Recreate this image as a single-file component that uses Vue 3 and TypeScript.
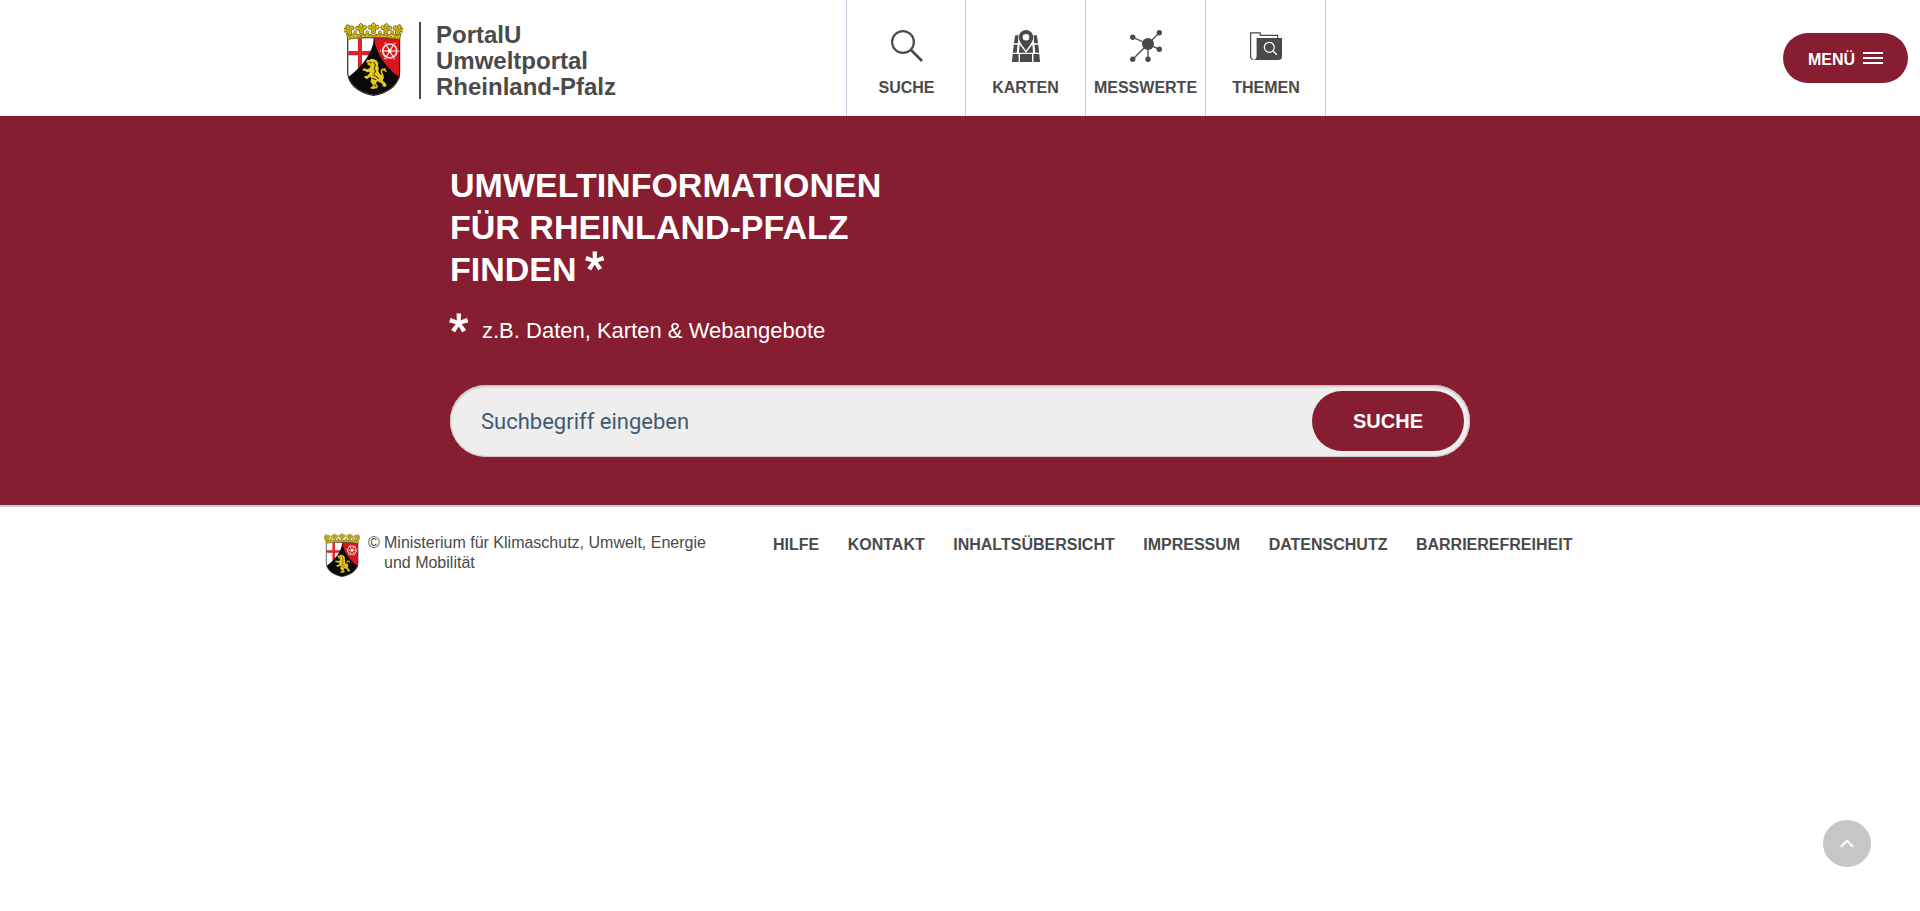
<script setup lang="ts">
import { ref, defineComponent, h } from 'vue'

interface NavItem {
  label: string
  icon: 'search' | 'map' | 'network' | 'folder'
}

const navItems: NavItem[] = [
  { label: 'SUCHE', icon: 'search' },
  { label: 'KARTEN', icon: 'map' },
  { label: 'MESSWERTE', icon: 'network' },
  { label: 'THEMEN', icon: 'folder' },
]

const footerLinks: string[] = [
  'HILFE',
  'KONTAKT',
  'INHALTSÜBERSICHT',
  'IMPRESSUM',
  'DATENSCHUTZ',
  'BARRIEREFREIHEIT',
]

const query = ref('')

const spokes = [0, 60, 120]
const leaves = [
  { x: 58, y: 62, r: -18 },
  { x: 94, y: 59, r: -6 },
  { x: 130, y: 57, r: 0 },
  { x: 167, y: 59, r: 6 },
  { x: 202, y: 62, r: 18 },
]

// Coat of arms, used in the header and in the footer
const CoatOfArms = defineComponent({
  setup() {
    const shield = 'M54 82H207V186C207 218 180 246 130.500 255C81 246 54 218 54 186Z'
    return () =>
      h('svg', { viewBox: '43 35 174 222', preserveAspectRatio: 'none', 'aria-hidden': 'true' }, [
        h('path', { d: shield, fill: '#fff' }),
        h('path', { d: 'M130 82H207V205H130Z', fill: '#d8161d' }),
        h('path', { d: 'M84 84H96V122H126V135H96V184H84V135H56V122H84Z', fill: '#e0202a' }),
        h('path', {
          d: 'M132 84C127 130 96 170 56 200C66 230 96 248 130.500 254C166 248 196 230 205 200C165 170 137 130 132 84Z',
          fill: '#0c0a08',
        }),
        h('path', { d: shield, fill: 'none', stroke: '#2c2928', 'stroke-width': 3.5 }),
        h('g', { stroke: '#f6dede', fill: 'none' }, [
          h('circle', { cx: 178, cy: 122, r: 21, 'stroke-width': 5 }),
          h('circle', { cx: 178, cy: 122, r: 27, 'stroke-width': 3, 'stroke-dasharray': '6 22.270', 'stroke-dashoffset': 3 }),
          ...spokes.map((a) =>
            h('path', { d: 'M158 122H198', 'stroke-width': 4, transform: `rotate(${a} 178 122)` }),
          ),
        ]),
        h('circle', { cx: 178, cy: 122, r: 5, fill: '#fff' }),
        h('path', {
          d: 'M108 154L112 148L118 149L123 145L132 147L140 151L144 158L143 166L146 173L144 182L148 190L155 195L159 202L157 211L163 216L169 224L165 230L157 228L156 221L149 216L141 213L137 219L143 227L141 234L127 236L119 233L128 228L127 221L121 214L124 204L120 199L112 206L104 203L103 197L111 197L117 190L119 184L110 186L105 181L99 182L98 176L106 174L111 177L119 174L121 166L112 163L113 159Z',
          fill: '#e6cb1c',
        }),
        h('path', {
          d: 'M151 207C163 206 158 196 155 190C150 181 155 175 162 178L168 184M154 180L166 175',
          fill: 'none',
          stroke: '#e6cb1c',
          'stroke-width': 4.5,
        }),
        h('path', {
          d: 'M130 155L136 164L132 174L136 183L131 190M128 193L138 198L146 206M116 155L124 158M126 204L138 208M132 222L138 229',
          fill: 'none',
          stroke: '#3c330a',
          'stroke-width': 3,
        }),
        h('path', {
          d: 'M50 68L60 76L76 70L92 75L112 70L130 75L148 70L168 75L184 70L200 76L211 68L207 87C160 79 101 79 54 87Z',
          fill: '#dcc21c',
          stroke: '#67580f',
          'stroke-width': 2.5,
        }),
        h('path', { d: 'M58 82C105 74 156 74 203 82', fill: 'none', stroke: '#8b761a', 'stroke-width': 3, 'stroke-dasharray': '6 5' }),
        ...leaves.map((l) =>
          h('g', { transform: `translate(${l.x} ${l.y}) rotate(${l.r})` }, [
            h('path', {
              d: 'M0 -20L6 -15L5 -9L12 -13L17 -7L13 0L6 -1L5 12H-5L-6 -1L-13 0L-17 -7L-12 -13L-5 -9L-6 -15Z',
              fill: '#dfc51c',
              stroke: '#6b5c10',
              'stroke-width': 2.5,
            }),
            h('path', { d: 'M-9 -5H9M0 -12V8', stroke: '#94801a', 'stroke-width': 2 }),
          ]),
        ),
        ...[76, 112, 149, 185].map((x) =>
          h('circle', { cx: x, cy: 66, r: 4.5, fill: '#e4cc2c', stroke: '#6b5c10', 'stroke-width': 2 }),
        ),
      ])
  },
})
</script>

<template>
  <div class="page">
    <header class="header">
      <a class="brand">
        <CoatOfArms class="crest" />
        <span class="brand-name">PortalU<br />Umweltportal<br />Rheinland-Pfalz</span>
      </a>
      <nav class="nav">
        <a v-for="item in navItems" :key="item.label" class="nav-item" :class="item.icon">
          <svg v-if="item.icon === 'search'" class="nav-icon" viewBox="0 0 32 32">
            <circle cx="12" cy="12" r="10.900" fill="none" stroke="currentColor" stroke-width="2.2" />
            <path d="M19.800 19.800L31 31" stroke="currentColor" stroke-width="2.700" />
          </svg>
          <svg v-else-if="item.icon === 'map'" class="nav-icon" viewBox="0 0 32 32">
            <path d="M5.200 5.300H9L7.700 13.200H3.900ZM3.700 14.800H7.500L6.800 22.700H2.900ZM2.700 24.100H8.600V32H2ZM23 5.300H26.800L28.100 13.200H24.300ZM24.500 14.800H28.300L29.100 22.700H25.200ZM23.400 24.100H29.300L30 32H23.400ZM10 24.100H22V32H10ZM9.600 14.800L10.800 16L16 22.700H9ZM22.400 14.800L21.200 16L16 22.700H23Z" fill="currentColor" />
            <path d="M16 0A7.200 7.200 0 0 1 23.200 7.200C23.200 12 18.500 16.500 16 20.700C13.500 16.500 8.800 12 8.800 7.200A7.200 7.200 0 0 1 16 0Z" fill="currentColor" stroke="#fff" stroke-width="1.200" paint-order="stroke" />
            <circle cx="16" cy="7.300" r="3.300" fill="#fff" />
          </svg>
          <svg v-else-if="item.icon === 'network'" class="nav-icon" viewBox="0 0 32 32">
            <path d="M18 14L29.300 2.800M18 14L2.800 7.300M18 14L2.800 29.300M18 14V29.300M18 14L29.300 19.300" stroke="currentColor" stroke-width="1.300" />
            <g fill="currentColor">
              <circle cx="18" cy="14" r="6" />
              <circle cx="29.300" cy="2.700" r="2.700" />
              <circle cx="2.700" cy="7.300" r="2.700" />
              <circle cx="2.700" cy="29.300" r="2.700" />
              <circle cx="18" cy="29.300" r="2.700" />
              <circle cx="29.300" cy="19.300" r="2.700" />
            </g>
          </svg>
          <svg v-else class="nav-icon" viewBox="0 0 32 32">
            <path d="M3.200 29.300C1.600 29.300 .6 28.300 .6 26.700V2.800H10.200V5.400H27.700V8.500" fill="none" stroke="currentColor" stroke-width="1.200" />
            <path d="M6.600 8H32V26.600Q32 29.900 28.700 29.900H3.400Q6.600 29.300 6.600 26.300Z" fill="currentColor" />
            <circle cx="19.300" cy="17.300" r="5" fill="none" stroke="#fff" stroke-width="1.200" />
            <path d="M22.800 20.800L26.800 24.800" stroke="#fff" stroke-width="1.400" />
          </svg>
          <span>{{ item.label }}</span>
        </a>
      </nav>
      <button class="menu-button" type="button">
        <span class="menu-label">MENÜ</span>
        <span class="bars"><i></i><i></i><i></i></span>
      </button>
    </header>

    <main class="hero">
      <h1>UMWELTINFORMATIONEN<br />FÜR RHEINLAND-PFALZ<br />FINDEN <span class="star">*</span></h1>
      <p class="hint"><span class="star">*</span><span>z.B. Daten, Karten &amp; Webangebote</span></p>
      <form class="search-form" @submit.prevent>
        <input v-model="query" type="text" placeholder="Suchbegriff eingeben" />
        <button type="submit">SUCHE</button>
      </form>
    </main>

    <footer class="footer">
      <CoatOfArms class="footer-crest" />
      <p class="copyright"><span>©</span><span>Ministerium für Klimaschutz, Umwelt, Energie<br />und Mobilität</span></p>
      <nav class="footer-nav">
        <a v-for="link in footerLinks" :key="link">{{ link }}</a>
      </nav>
    </footer>

    <button class="to-top" type="button" aria-label="Nach oben">
      <svg viewBox="0 0 14 9"><path d="M1 7.700L7 1.700L13 7.700" fill="none" stroke="#fff" stroke-width="2" /></svg>
    </button>
  </div>
</template>

<style>
body {
  margin: 0;
  background: #fff;
}
</style>

<style scoped>
.page {
  box-sizing: border-box;
  height: 911px;
  overflow: hidden;
  font-family: 'Liberation Sans', Arial, sans-serif;
  font-size: 16px;
  color: #4a4a4a;
}
button {
  border: 0;
  padding: 0;
  background: #861d31;
  color: #fff;
  font-family: inherit;
  font-weight: 700;
}
.header {
  display: flex;
  height: 116px;
}
.brand {
  display: flex;
  align-items: flex-start;
  box-sizing: border-box;
  width: 846px;
  padding: 22px 0 0 344px;
}
.crest {
  width: 59px;
  height: 74px;
  margin-right: 16px;
}
.brand-name {
  height: 77px;
  border-left: 2px solid #4a4a4a;
  padding-left: 15px;
  font-size: 24px;
  line-height: 26px;
  font-weight: 700;
}
.nav {
  display: flex;
}
.nav-item {
  box-sizing: border-box;
  display: flex;
  flex-direction: column;
  align-items: center;
  width: 120px;
  padding-top: 30px;
  border-right: 1px solid #c5cddd;
  font-weight: 700;
  line-height: 18px;
}
.nav-item:first-child {
  border-left: 1px solid #c5cddd;
}
.nav-item.search,
.nav-item.folder {
  padding-left: 1px;
}
.nav-icon {
  width: 32px;
  height: 32px;
  margin-bottom: 17px;
}
.menu-button {
  display: flex;
  align-items: center;
  justify-content: center;
  gap: 8px;
  width: 125px;
  height: 50px;
  margin: 33px 12px 0 auto;
  border-radius: 25px;
  font-size: 16px;
}
.menu-label {
  padding-top: 3px;
}
.bars {
  display: flex;
  flex-direction: column;
  gap: 3px;
}
.bars i {
  width: 20px;
  height: 2px;
  background: #fff;
}
.hero {
  box-sizing: border-box;
  height: 391px;
  padding: 48px 450px 0;
  background: #861d31;
  border-bottom: 2px solid #c5cde0;
  color: #fff;
}
h1 {
  margin: 0;
  font-size: 34px;
  line-height: 42px;
}
.star {
  font-weight: 400;
  font-size: 50px;
  line-height: 0;
  -webkit-text-stroke: 1px #fff;
}
h1 .star {
  position: relative;
  top: 6px;
  left: -1px;
}
.hint {
  display: flex;
  align-items: flex-start;
  height: 32px;
  margin: 25px 0 38px;
  font-size: 22px;
  line-height: 32px;
}
.hint .star {
  box-sizing: border-box;
  width: 33px;
  margin-left: -1px;
  line-height: 35px;
}
.search-form {
  box-sizing: border-box;
  display: flex;
  align-items: center;
  width: 1020px;
  height: 72px;
  padding: 0 6px 0 31px;
  border-radius: 36px;
  background: #eee;
  box-shadow: inset 0 0 1px 1px #c4c4c4, inset 0 2px 2px #ccc;
}
.search-form input {
  flex: 1;
  border: 0;
  padding: 0;
  outline: 0;
  background: transparent;
  font-family: Roboto, sans-serif;
  font-size: 22px;
}
.search-form input::placeholder {
  color: #3f5a70;
  opacity: 1;
}
.search-form button {
  width: 152px;
  height: 60px;
  border-radius: 30px;
  font-size: 20px;
}
.footer {
  display: flex;
  align-items: flex-start;
  padding: 26px 0 0 324px;
}
.footer-crest {
  width: 36px;
  height: 44px;
}
.copyright {
  display: flex;
  width: 405px;
  margin: 0 0 0 8px;
  line-height: 20px;
}
.copyright span:first-child {
  width: 16px;
}
.footer-nav {
  display: flex;
  gap: 28.500px;
  padding-top: 3px;
  font-weight: 700;
  line-height: 18px;
}
.to-top {
  position: fixed;
  left: 1823px;
  top: 820px;
  display: flex;
  align-items: center;
  justify-content: center;
  width: 48px;
  height: 47px;
  border-radius: 50%;
  background: #c6c6c6;
}
.to-top svg {
  width: 14px;
  height: 9px;
}
</style>
